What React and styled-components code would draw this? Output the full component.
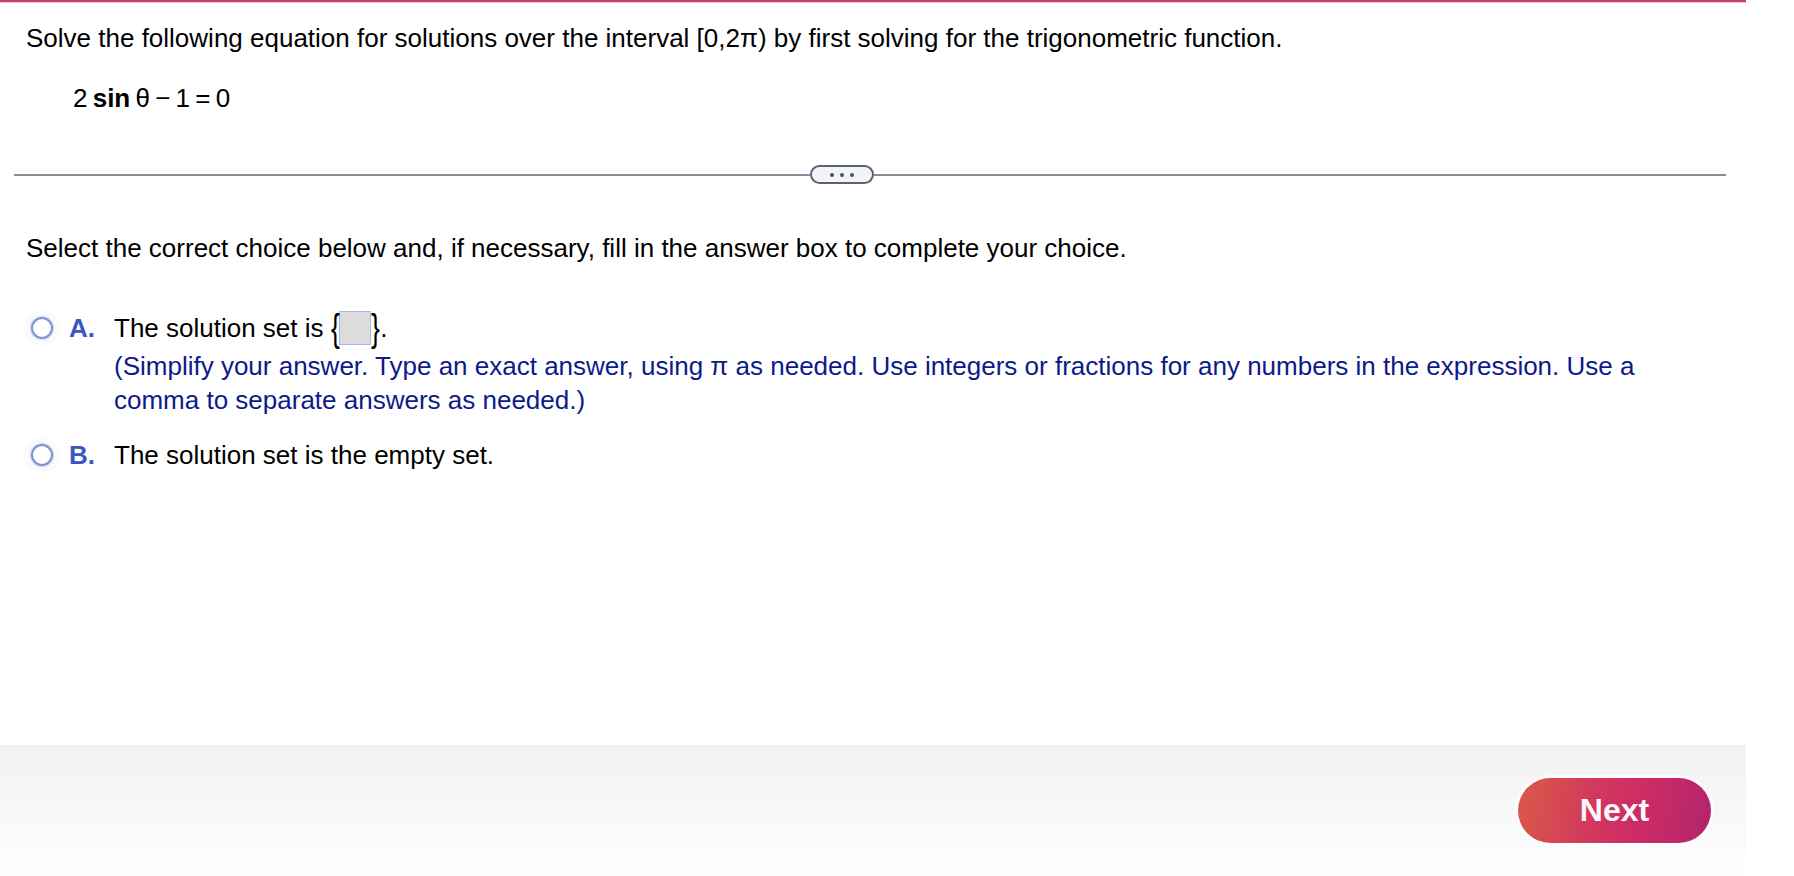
import React from "react";
import styled, { createGlobalStyle } from "styled-components";

const GlobalStyle = createGlobalStyle`
  html, body {
    margin: 0;
    padding: 0;
    background: #ffffff;
  }
  body {
    font-family: "Liberation Sans", Arial, sans-serif;
    color: #000;
  }
`;

export default function App() {
  return (
    <>
      <GlobalStyle />
      <Page>
        <Main>
          <Question>
            Solve the following equation for solutions over the interval [0,2π) by first solving for the
            trigonometric function.
          </Question>
          <Equation>
            2 <b>sin</b> θ − 1 = 0
          </Equation>

          <DividerRow>
            <Line $fixed />
            <MoreButton aria-label="more">
              <Dot />
              <Dot />
              <Dot />
            </MoreButton>
            <Line />
          </DividerRow>

          <Prompt>
            Select the correct choice below and, if necessary, fill in the answer box to complete your choice.
          </Prompt>

          <Choices>
            <Choice>
              <Radio />
              <Letter>A.</Letter>
              <ChoiceBody>
                <ChoiceText>
                  The solution set is <Brace>{"{"}</Brace>
                  <AnswerBox />
                  <Brace>{"}"}</Brace>.
                </ChoiceText>
                <Hint>
                  (Simplify your answer. Type an exact answer, using π as needed. Use integers or fractions for any
                  numbers in the expression. Use a comma to separate answers as needed.)
                </Hint>
              </ChoiceBody>
            </Choice>
            <Choice>
              <Radio />
              <Letter>B.</Letter>
              <ChoiceBody>
                <ChoiceText>The solution set is the empty set.</ChoiceText>
              </ChoiceBody>
            </Choice>
          </Choices>
        </Main>
        <Footer>
          <NextButton>Next</NextButton>
        </Footer>
      </Page>
    </>
  );
}

const Page = styled.div`
  width: 1746px;
  height: 100vh;
  display: flex;
  flex-direction: column;
  border-top: 2px solid #c9416a;
  box-shadow: inset 0 1px 0 #ecc3cf;
  box-sizing: border-box;
`;

const Main = styled.div`
  flex: 1;
  padding: 21px 20px 0 14px;
`;

const Question = styled.p`
  margin: 0 0 0 12px;
  font-size: 26px;
  line-height: 30px;
`;

const Equation = styled.div`
  margin: 30px 0 0 59px;
  font-size: 26px;
  line-height: 30px;
  word-spacing: -2px;
  b {
    font-weight: 700;
  }
`;

const DividerRow = styled.div`
  display: flex;
  align-items: center;
  margin-top: 52px;
  width: 1712px;
`;

const Line = styled.div`
  flex: ${(p) => (p.$fixed ? "0 0 796px" : "1")};
  height: 2px;
  background: #878d9a;
`;

const MoreButton = styled.button`
  width: 64px;
  height: 19px;
  padding: 0;
  border: 2px solid #5b6372;
  border-radius: 10px;
  background: #f3f4f6;
  display: flex;
  align-items: center;
  justify-content: center;
  gap: 6px;
`;

const Dot = styled.span`
  width: 4px;
  height: 4px;
  border-radius: 50%;
  background: #4b5261;
`;

const Prompt = styled.p`
  margin: 49px 0 0 12px;
  font-size: 26px;
  line-height: 30px;
`;

const Choices = styled.div`
  margin-top: 48px;
  display: flex;
  flex-direction: column;
  gap: 21px;
`;

const Choice = styled.div`
  display: flex;
  align-items: flex-start;
  padding-left: 17px;
`;

const Radio = styled.span`
  flex: none;
  width: 18px;
  height: 18px;
  margin-top: 6px;
  border-radius: 50%;
  border: 2px solid #7f8fd8;
  box-shadow: 0 0 1px 1px rgba(123, 140, 216, 0.35), 0 0 0 7px rgba(0, 0, 0, 0.015);
`;

const Letter = styled.span`
  flex: none;
  width: 45px;
  margin-left: 16px;
  font-size: 26px;
  line-height: 34px;
  font-weight: 700;
  color: #3d55c3;
`;

const ChoiceBody = styled.div`
  flex: 1;
  padding-right: 50px;
`;

const ChoiceText = styled.div`
  font-size: 26px;
  line-height: 34px;
  display: flex;
  align-items: center;
  white-space: pre;
`;

const Brace = styled.span`
  display: inline-block;
  font-size: 38px;
  line-height: 34px;
  transform: scaleX(0.7);
  margin: 0 -2px;
`;

const AnswerBox = styled.span`
  width: 30px;
  height: 32px;
  background: #dcdcdc;
  border: 1px solid #a8bae7;
`;

const Hint = styled.div`
  margin-top: 4px;
  font-size: 26px;
  line-height: 34px;
  color: #0c1a8a;
`;

const Footer = styled.div`
  height: 131px;
  flex: none;
  background: linear-gradient(180deg, #f1f1f1 0%, #fefefe 100%);
  display: flex;
  justify-content: flex-end;
  align-items: flex-start;
  padding: 33px 35px 0 0;
  box-sizing: border-box;
`;

const NextButton = styled.button`
  width: 193px;
  height: 65px;
  border: none;
  border-radius: 33px;
  background: linear-gradient(100deg, #da5a48 0%, #d2385d 40%, #cc2b66 65%, #b2246c 100%);
  box-shadow: 0 0 0 3px rgba(255, 255, 255, 0.8);
  color: #fbf6fa;
  font-family: "Liberation Sans", Arial, sans-serif;
  font-weight: 700;
  font-size: 32px;
`;
